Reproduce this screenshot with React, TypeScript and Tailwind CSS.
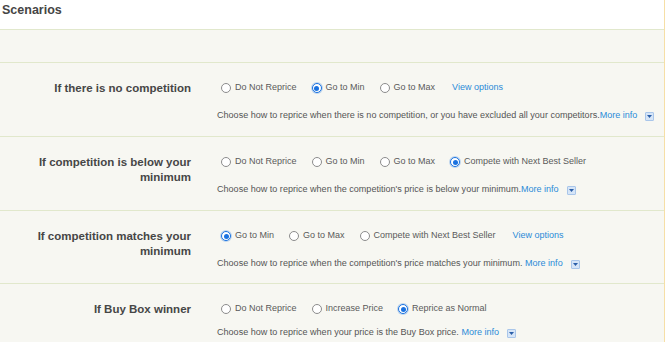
type Option = { label: string; checked?: boolean };

type Scenario = {
  title: string;
  options: Option[];
  viewOptions?: boolean;
  desc: string;
  height: string;
  descGap: string;
};

const scenarios: Scenario[] = [
  {
    title: 'If there is no competition',
    options: [{ label: 'Do Not Reprice' }, { label: 'Go to Min', checked: true }, { label: 'Go to Max' }],
    viewOptions: true,
    desc: 'Choose how to reprice when there is no competition, or you have excluded all your competitors.',
    height: 'h-[74px]',
    descGap: 'mt-[15px]',
  },
  {
    title: 'If competition is below your minimum',
    options: [
      { label: 'Do Not Reprice' },
      { label: 'Go to Min' },
      { label: 'Go to Max' },
      { label: 'Compete with Next Best Seller', checked: true },
    ],
    desc: "Choose how to reprice when the competition's price is below your minimum.",
    height: 'h-[74px]',
    descGap: 'mt-[15px]',
  },
  {
    title: 'If competition matches your minimum',
    options: [{ label: 'Go to Min', checked: true }, { label: 'Go to Max' }, { label: 'Compete with Next Best Seller' }],
    viewOptions: true,
    desc: "Choose how to reprice when the competition's price matches your minimum. ",
    height: 'h-[73px]',
    descGap: 'mt-[15px]',
  },
  {
    title: 'If Buy Box winner',
    options: [{ label: 'Do Not Reprice' }, { label: 'Increase Price' }, { label: 'Reprice as Normal', checked: true }],
    desc: 'Choose how to reprice when your price is the Buy Box price. ',
    height: 'h-[74px]',
    descGap: 'mt-[11px]',
  },
];

function Radio({ checked }: { checked?: boolean }) {
  if (checked) {
    return (
      <span className="flex h-[10px] w-[10px] shrink-0 items-center justify-center rounded-full border border-[#1a72e0] bg-white shadow-[0_0_0_1px_rgba(26,114,224,0.25)]">
        <span className="h-[5px] w-[5px] rounded-full bg-[#1a72e0]" />
      </span>
    );
  }
  return <span className="h-[10px] w-[10px] shrink-0 rounded-full border border-[#8c8c8c] bg-white" />;
}

function InfoToggle() {
  return (
    <span className="ml-[8px] inline-flex h-[9px] w-[9px] items-center justify-center rounded-[1px] border border-[#a9c6ea] bg-[#d6e5f7] align-middle">
      <svg width="5" height="3" viewBox="0 0 5 3">
        <path d="M0 0h5L2.5 3z" fill="#2a5ea8" />
      </svg>
    </span>
  );
}

export default function App() {
  return (
    <div
      className="h-[342px] w-[665px] overflow-hidden border-r border-[#f6dfa6] bg-[#f7f7f2]"
      style={{ fontFamily: '"Liberation Sans", Arial, sans-serif' }}
    >
      <div className="h-[30px] border-b border-[#e1e8cc] bg-white pl-[2px] pt-[2px] text-[12.5px] font-bold leading-[16px] text-[#454545]">
        Scenarios
      </div>
      <div className="h-[33px] border-b border-[#e1e8cc]" />

      {scenarios.map((s) => (
        <div key={s.title} className={`flex border-b border-[#e1e8cc] ${s.height}`}>
          <div className="w-[217px] shrink-0 pl-[20px] pr-[26px] pt-[18px] text-right text-[11.5px] font-bold leading-[15px] text-[#464646]">
            {s.title}
          </div>
          <div className="pt-[18px]">
            <div className="flex h-[14px] items-center pl-[4px] text-[9px] text-[#5a5a5a]">
              {s.options.map((o) => (
                <label key={o.label} className="mr-[15px] flex items-center gap-[4px]">
                  <Radio checked={o.checked} />
                  <span>{o.label}</span>
                </label>
              ))}
              {s.viewOptions && <a className="ml-[2px] text-[#2b8bd8]">View options</a>}
            </div>
            <div className={`flex h-[12px] items-center text-[9.05px] text-[#555] ${s.descGap}`}>
              <span className="whitespace-pre">{s.desc}</span>
              <a className="text-[#2b8bd8]">More info</a>
              <InfoToggle />
            </div>
          </div>
        </div>
      ))}
    </div>
  );
}
